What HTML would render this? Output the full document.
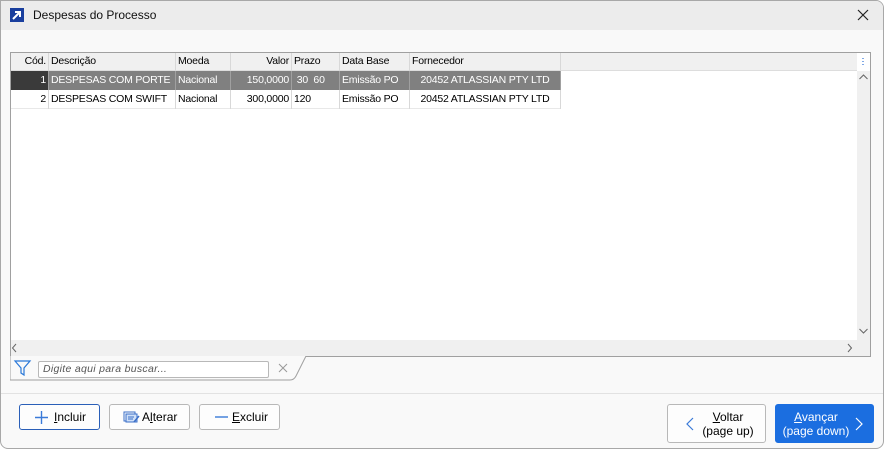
<!DOCTYPE html>
<html><head><meta charset="utf-8"><style>
*{box-sizing:border-box;margin:0;padding:0}
body{width:884px;height:449px;overflow:hidden;background:#fff;font-family:"Liberation Sans",sans-serif;font-size:11px;color:#000}
.win{position:absolute;left:0;top:0;width:884px;height:449px;border:1px solid #a8a8a8;border-radius:0 8px 8px 8px;background:#f9f9f9;overflow:hidden}
.title{position:absolute;left:0;top:0;right:0;height:29px;background:#ececec}
.title .ic{position:absolute;left:9px;top:7px;width:14px;height:14px;background:#1a3f9e}
.title .t{position:absolute;left:32px;top:7px;font-size:12px;color:#111}
.title .x{position:absolute;right:13px;top:7px}
.grid{position:absolute;left:9px;top:51px;width:861px;height:305px;border:1px solid #a0a0a0;background:#fff}
.hdr{position:absolute;left:0;top:0;height:18px;width:847px;background:#f0f0f0;border-bottom:1px solid #ddd}
.c{position:absolute;top:0;height:18px;line-height:17px;white-space:nowrap;border-right:1px solid #d8d8d8;padding:0 2px;overflow:hidden;font-size:10.5px;letter-spacing:-0.2px}
.r{text-align:right}
.row{position:absolute;left:0;height:19px;width:550px}
.row .c{height:19px;line-height:18px}
.sel{background:#808080;color:#fff}
.sel .c{border-right-color:#a0a0a0}
.sel .c0{background:#3a3a3a}
.vs{position:absolute;right:0;top:0;width:13px;height:288px;background:#f0f0f0}
.hs{position:absolute;left:0;bottom:0;height:16px;width:847px;background:#f0f0f0}
.corner{position:absolute;right:0;bottom:0;width:13px;height:16px;background:#f0f0f0}
.search{position:absolute;left:37px;top:360px;width:231px;height:17px;border:1px solid #b8b8b8;border-radius:2px;background:#fff;font-style:italic;color:#555;padding-left:4px;line-height:15px;font-size:10.5px;letter-spacing:.3px}
.sep{position:absolute;left:0;right:0;top:392px;border-top:1px solid #e2e2e2}
.btn{position:absolute;top:403px;height:26px;border:1px solid #b8b8b8;border-radius:3px;background:#fdfdfd;font-size:12px;line-height:24px;white-space:nowrap}
.u{text-decoration:underline}
</style></head><body><div class="win">
<div class="title"><div class="ic"><svg width="14" height="14"><path d="M3 11 L10 4 M5 4 H10 V9" stroke="#fff" stroke-width="2" fill="none"/></svg></div><div class="t">Despesas do Processo</div>
<svg class="x" width="14" height="14" viewBox="0 0 14 14"><path d="M2 2L12 12M12 2L2 12" stroke="#222" stroke-width="1.2"/></svg></div>

<div class="grid">
<div class="hdr">
<div class="c r" style="left:0;width:38px">Cód.</div>
<div class="c" style="left:38px;width:127px">Descrição</div>
<div class="c" style="left:165px;width:55px">Moeda</div>
<div class="c r" style="left:220px;width:61px">Valor</div>
<div class="c" style="left:281px;width:48px">Prazo</div>
<div class="c" style="left:329px;width:70px">Data Base</div>
<div class="c" style="left:399px;width:151px">Fornecedor</div>
</div>
<div class="row sel" style="top:18px">
<div class="c r c0" style="left:0;width:38px">1</div>
<div class="c" style="left:38px;width:127px">DESPESAS COM PORTE</div>
<div class="c" style="left:165px;width:55px">Nacional</div>
<div class="c r" style="left:220px;width:61px">150,0000</div>
<div class="c" style="left:281px;width:48px">&nbsp;30 &nbsp;60</div>
<div class="c" style="left:329px;width:70px">Emissão PO</div>
<div class="c" style="left:399px;width:151px;text-align:center">20452 ATLASSIAN PTY LTD</div>
</div>
<div class="row" style="top:37px;border-bottom:1px solid #e8e8e8">
<div class="c r" style="left:0;width:38px">2</div>
<div class="c" style="left:38px;width:127px">DESPESAS COM SWIFT</div>
<div class="c" style="left:165px;width:55px">Nacional</div>
<div class="c r" style="left:220px;width:61px">300,0000</div>
<div class="c" style="left:281px;width:48px">120</div>
<div class="c" style="left:329px;width:70px">Emissão PO</div>
<div class="c" style="left:399px;width:151px;text-align:center">20452 ATLASSIAN PTY LTD</div>
</div>
<div class="vs">
<svg width="13" height="288" style="position:absolute;left:0;top:0"><rect x="0" y="0" width="13" height="18" fill="#fff"/>
<path d="M6 5v1M6 8v1M6 11v1" stroke="#3a7ad8" stroke-width="1.3"/>
<path d="M2.5 26L6.5 22L10.5 26" stroke="#666" fill="none"/>
<path d="M2.5 276L6.5 280L10.5 276" stroke="#666" fill="none"/></svg></div>
<div class="hs"><svg width="847" height="16"><path d="M5 4L1.5 8L5 12" stroke="#666" fill="none"/><path d="M837 4L840.5 8L837 12" stroke="#666" fill="none"/></svg></div>
<div class="corner"></div>
</div>

<svg style="position:absolute;left:9px;top:355px" width="300" height="26"><path d="M0 0V24H280Q284 24 286 20L296 0" fill="#f9f9f9" stroke="#a0a0a0"/>
<path d="M5 5H20L14 12V19L11 17V12Z" fill="none" stroke="#2a78d8" stroke-width="1.2"/>
<path d="M269 8L277 16M277 8L269 16" stroke="#999"/></svg>
<div class="search">Digite aqui para buscar...</div>

<div class="sep"></div>

<div class="btn" style="left:18px;width:81px;border-color:#2a5fb8">
<svg style="position:absolute;left:15px;top:6px" width="13" height="13"><path d="M6.5 0V13M0 6.5H13" stroke="#3a7ad8" stroke-width="1.4"/></svg>
<span style="position:absolute;left:34px"><span class="u">I</span>ncluir</span></div>
<div class="btn" style="left:108px;width:81px">
<svg style="position:absolute;left:13px;top:5px" width="17" height="14"><rect x="1" y="2" width="11" height="9" fill="none" stroke="#3a6ec8"/><rect x="3" y="4" width="11" height="8" fill="#cfe0f8" stroke="#3a6ec8"/><path d="M5 7H11M5 9H10" stroke="#3a6ec8"/><path d="M11 12L16 6" stroke="#3a6ec8" stroke-width="1.5"/></svg>
<span style="position:absolute;left:32px">A<span class="u">l</span>terar</span></div>
<div class="btn" style="left:198px;width:81px">
<svg style="position:absolute;left:15px;top:11px" width="13" height="2"><path d="M0 1H13" stroke="#3a7ad8" stroke-width="1.4"/></svg>
<span style="position:absolute;left:32px"><span class="u">E</span>xcluir</span></div>

<div class="btn" style="left:666px;width:99px;height:39px;line-height:14px">
<svg style="position:absolute;left:18px;top:12px" width="8" height="14"><path d="M7 1L1 7L7 13" stroke="#3a7ad8" fill="none" stroke-width="1.2"/></svg>
<div style="position:absolute;left:30px;top:5px;text-align:center;width:60px"><span class="u">V</span>oltar<br>(page up)</div></div>
<div class="btn" style="left:774px;width:99px;height:39px;line-height:14px;background:#1b6ee0;border-color:#1b6ee0;color:#fff">
<svg style="position:absolute;left:79px;top:12px" width="8" height="14"><path d="M1 1L7 7L1 13" stroke="#fff" fill="none" stroke-width="1.2"/></svg>
<div style="position:absolute;left:2px;top:5px;text-align:center;width:76px"><span class="u">A</span>vançar<br>(page down)</div></div>
</div></body></html>
